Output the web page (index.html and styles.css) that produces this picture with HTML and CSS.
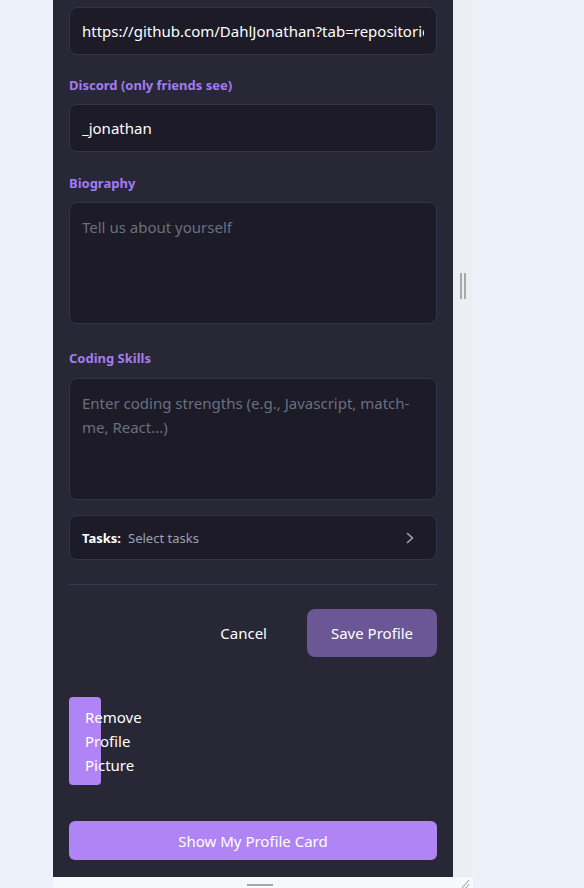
FILE: index.html
```html
<!DOCTYPE html>
<html lang="en">
<head>
<meta charset="utf-8">
<title>Edit Profile</title>
<link rel="stylesheet" href="styles.css">
</head>
<body>
<div class="frame">
  <div class="row">
    <main class="panel">
      <input class="field" type="text" value="https://github.com/DahlJonathan?tab=repositories">
      <label class="label label-first">Discord (only friends see)</label>
      <input class="field" type="text" value="_jonathan">
      <label class="label">Biography</label>
      <textarea class="area" placeholder="Tell us about yourself"></textarea>
      <label class="label label-gap">Coding Skills</label>
      <textarea class="area" placeholder="Enter coding strengths (e.g., Javascript, match-me, React...)"></textarea>
      <div class="tasks">
        <span class="tasks-title">Tasks:</span>
        <span class="tasks-value">Select tasks</span>
        <svg class="chev" width="12" height="14" viewBox="0 0 12 14"><path d="M3.5 2.5 L8.5 7 L3.5 11.5" fill="none" stroke="#a1a6b4" stroke-width="1.6" stroke-linecap="round" stroke-linejoin="round"/></svg>
      </div>
      <hr class="divider">
      <div class="actions">
        <button class="btn-cancel" type="button">Cancel</button>
        <button class="btn-save" type="button">Save Profile</button>
      </div>
      <button class="btn-remove" type="button">Remove Profile Picture</button>
      <button class="btn-card" type="button">Show My Profile Card</button>
    </main>
    <div class="vhandle"><span class="vgrip"></span></div>
  </div>
  <div class="hbar">
    <span class="hgrip"></span>
    <svg class="corner" width="10" height="8" viewBox="0 0 10 8"><path d="M9 0 L2 8 M9 4 L6 8" stroke="#9a9a9a" stroke-width="1"/></svg>
  </div>
</div>
</body>
</html>
```

FILE: styles.css
```css
* { box-sizing: border-box; }
html, body { margin: 0; padding: 0; }
body {
  background: #ecf0f8;
  font-family: "Noto Sans", "Open Sans", sans-serif;
  height: 888px;
  overflow: hidden;
}
.frame {
  margin-left: 53px;
  width: 420px;
  display: flex;
  flex-direction: column;
}
.row { display: flex; }
.panel {
  width: 400px;
  height: 877px;
  background: #282736;
  padding: 7px 16px 17px;
  display: flex;
  flex-direction: column;
}
.field {
  display: block;
  width: 100%;
  height: 48px;
  flex: none;
  background: #1c1b27;
  border: 1px solid #34334a;
  border-radius: 8px;
  color: #ffffff;
  font-family: inherit;
  font-size: 15px;
  padding: 0 12px;
  outline: none;
}
.label {
  display: block;
  color: #a37cf0;
  font-weight: 700;
  font-size: 13px;
  line-height: 20px;
  margin: 21px 0 9px;
}
.label-first { margin-top: 20px; }
.label-gap { margin-top: 24px; margin-bottom: 10px; }
.area {
  display: block;
  width: 100%;
  height: 122px;
  flex: none;
  background: #1c1b27;
  border: 1px solid #34334a;
  border-radius: 8px;
  color: #ffffff;
  font-family: inherit;
  font-size: 15px;
  line-height: 24px;
  padding: 12px;
  resize: none;
  outline: none;
}
.area::placeholder { color: #6b7080; }
.tasks {
  margin-top: 15px;
  height: 45px;
  flex: none;
  background: #1c1b27;
  border: 1px solid #34334a;
  border-radius: 8px;
  display: flex;
  align-items: center;
  padding: 0 12px;
  font-size: 13px;
}
.tasks-title { color: #ffffff; font-weight: 700; margin-right: 7px; }
.tasks-value { color: #9ca2b2; flex: 1; }
.chev { margin-right: 8px; }
.divider {
  margin: 24px 0 0;
  border: 0;
  border-top: 1px solid #3a3950;
  height: 0;
}
.actions {
  margin-top: 24px;
  display: flex;
  justify-content: flex-end;
  align-items: center;
  gap: 16px;
}
.btn-cancel {
  background: none;
  border: 0;
  color: #ffffff;
  font-family: inherit;
  font-size: 15px;
  padding: 0 24px;
  height: 48px;
}
.btn-save {
  background: #6b5796;
  border: 0;
  border-radius: 8px;
  color: #ffffff;
  font-family: inherit;
  font-size: 15px;
  width: 130px;
  height: 48px;
}
.btn-remove {
  margin-top: 40px;
  align-self: flex-start;
  width: 32px;
  padding: 8px 16px;
  background: #b084f5;
  border: 0;
  border-radius: 4px;
  color: #ffffff;
  font-family: inherit;
  font-size: 15px;
  line-height: 24px;
  text-align: left;
  overflow: visible;
  white-space: normal;
}
.btn-card {
  margin-top: 36px;
  width: 100%;
  height: 40px;
  background: #b084f5;
  border: 0;
  border-radius: 6px;
  color: #ffffff;
  font-family: inherit;
  font-size: 15px;
}
.vhandle {
  width: 20px;
  background: #edeef3;
  display: flex;
  align-items: flex-start;
  justify-content: center;
  padding-top: 273px;
}
.vgrip {
  width: 6px;
  height: 26px;
  border-left: 2px solid #a8a8a8;
  border-right: 2px solid #a8a8a8;
}
.hbar {
  height: 11px;
  background: #f7f8fc;
  position: relative;
  display: flex;
  justify-content: center;
}
.hgrip {
  margin-top: 7px;
  margin-left: -7px;
  width: 26px;
  height: 2px;
  background: #a8a8a8;
}
.corner {
  position: absolute;
  right: 3px;
  bottom: 0;
}
```
